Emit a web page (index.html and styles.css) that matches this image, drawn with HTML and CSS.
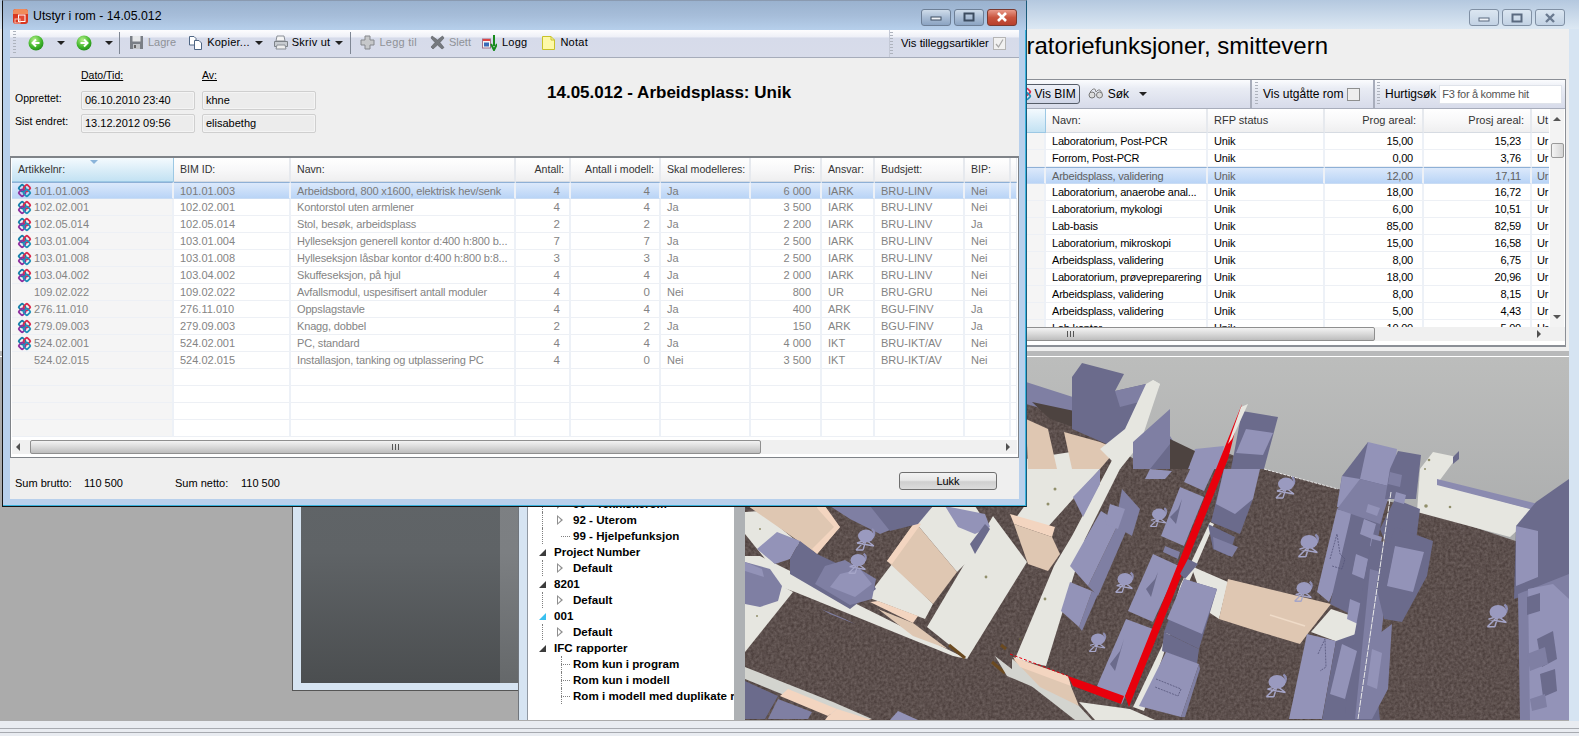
FILE: index.html
```html
<!DOCTYPE html>
<html lang="no">
<head>
<meta charset="utf-8">
<title>Utstyr i rom - 14.05.012</title>
<link rel="stylesheet" href="styles.css">
</head>
<body>
<svg class="defs" width="0" height="0">
  <defs>
    <symbol id="ifc" viewBox="0 0 16 16">
      <g fill="none" stroke-width="1.9">
        <rect x="2.6" y="2.6" width="5.8" height="5.8" rx="1.2" transform="rotate(45 5.5 5.5)" stroke="#157fa8"/>
        <rect x="7.6" y="2.6" width="5.8" height="5.8" rx="1.2" transform="rotate(45 10.5 5.5)" stroke="#d92a4c"/>
        <rect x="2.6" y="7.6" width="5.8" height="5.8" rx="1.2" transform="rotate(45 5.5 10.5)" stroke="#8e2f9e"/>
        <rect x="7.6" y="7.6" width="5.8" height="5.8" rx="1.2" transform="rotate(45 10.5 10.5)" stroke="#1f8fb8"/>
      </g>
    </symbol>
    <symbol id="chair" viewBox="-16 -16 32 32">
      <path class="chl" d="M6-9C9-7 9-3 6 0"/>
      <path class="chs" d="M0 2L-9 5M0 2L-3 12M0 2L8 8M0 2L-10 12M-9 5L8 8M-10 12L-3 12"/>
      <ellipse class="chf" cx="0" cy="-2" rx="8" ry="6.5"/>
    </symbol>
    <radialGradient id="grn" cx=".4" cy=".3" r=".8"><stop offset="0" stop-color="#b6f08a"/><stop offset=".6" stop-color="#3fb52a"/><stop offset="1" stop-color="#1c7f18"/></radialGradient>
    <linearGradient id="skyg" x1="0" y1="0" x2="0" y2="1"><stop offset="0" stop-color="#bcbdbc"/><stop offset="1" stop-color="#9a9c9e"/></linearGradient>
    <filter id="rug" x="0" y="0" width="100%" height="100%" color-interpolation-filters="sRGB">
      <feTurbulence type="fractalNoise" baseFrequency=".35" numOctaves="2" seed="4"/>
      <feColorMatrix values=".2 0 0 0 .26  .2 0 0 0 .21  .2 0 0 0 .2  0 0 0 0 1"/>
      <feComposite in2="SourceGraphic" operator="in"/>
    </filter>
  </defs>
</svg>

<div class="mainwin">
  <div class="mainbar">
    <div class="wbtns wbtns-back">
      <span class="wb"><svg width="12" height="8" viewBox="0 0 12 8"><rect x="1" y="4" width="10" height="3" fill="#eef2f7" stroke="#5a6a80"/></svg></span>
      <span class="wb"><svg width="12" height="10" viewBox="0 0 12 10"><rect x="1.5" y="1.5" width="9" height="7" fill="none" stroke="#5a6a80" stroke-width="2"/></svg></span>
      <span class="wb wb-x"><svg width="14" height="10" viewBox="0 0 14 10"><path d="M3 1L11 9M11 1L3 9" stroke="#6a7a90" stroke-width="2.4"/></svg></span>
    </div>
  </div>
  <div class="mainbody">
    <div class="toppane">
      <h1 class="bighead">Laboratoriefunksjoner, smittevern</h1>
      <div class="panel">
        <div class="ptools">
          <div class="ptsec ptsec-main">
            <span class="visbim"><svg class="ifc"><use href="#ifc"/></svg>Vis BIM</span>
            <svg class="binoc" width="16" height="12" viewBox="0 0 16 12"><circle cx="4" cy="7" r="3" fill="#ddd" stroke="#777"/><circle cx="11.5" cy="7" r="3" fill="#ddd" stroke="#777"/><path d="M2 4L5 1H7L8 4L10 2H12L14 5" fill="none" stroke="#888"/></svg>
            <span class="plab">Søk</span>
            <span class="tri tri-sok"></span>
          </div>
          <div class="ptsec ptsec-vis">
            <span class="grip"></span>
            <span class="plab plab-wide">Vis utgåtte rom</span>
            <span class="check"></span>
          </div>
          <div class="ptsec ptsec-find">
            <span class="grip"></span>
            <span class="plab plab-wide">Hurtigsøk</span>
            <span class="findbox">F3 for å komme hit</span>
          </div>
        </div>
        <div class="pgridrow">
          <div class="pgridclip">
            <table class="rt">
              <colgroup><col class="r0"><col class="r1"><col class="r2"><col class="r3"><col class="r4"><col class="r5"></colgroup>
              <thead><tr><th class="sorted"></th><th>Navn:</th><th>RFP status</th><th class="num">Prog areal:</th><th class="num">Prosj areal:</th><th>Ut</th></tr></thead>
              <tbody>
                <tr><td class="fc"></td><td>Laboratorium, Post-PCR</td><td>Unik</td><td class="num">15,00</td><td class="num">15,23</td><td>Ur</td></tr>
                <tr><td class="fc"></td><td>Forrom, Post-PCR</td><td>Unik</td><td class="num">0,00</td><td class="num">3,76</td><td>Ur</td></tr>
                <tr class="sel"><td class="fc"></td><td>Arbeidsplass, validering</td><td>Unik</td><td class="num">12,00</td><td class="num">17,11</td><td>Ur</td></tr>
                <tr><td class="fc"></td><td>Laboratorium, anaerobe anal...</td><td>Unik</td><td class="num">18,00</td><td class="num">16,72</td><td>Ur</td></tr>
                <tr><td class="fc"></td><td>Laboratorium, mykologi</td><td>Unik</td><td class="num">6,00</td><td class="num">10,51</td><td>Ur</td></tr>
                <tr><td class="fc"></td><td>Lab-basis</td><td>Unik</td><td class="num">85,00</td><td class="num">82,59</td><td>Ur</td></tr>
                <tr><td class="fc"></td><td>Laboratorium, mikroskopi</td><td>Unik</td><td class="num">15,00</td><td class="num">16,58</td><td>Ur</td></tr>
                <tr><td class="fc"></td><td>Arbeidsplass, validering</td><td>Unik</td><td class="num">8,00</td><td class="num">6,75</td><td>Ur</td></tr>
                <tr><td class="fc"></td><td>Laboratorium, prøvepreparering</td><td>Unik</td><td class="num">18,00</td><td class="num">20,96</td><td>Ur</td></tr>
                <tr><td class="fc"></td><td>Arbeidsplass, validering</td><td>Unik</td><td class="num">8,00</td><td class="num">8,15</td><td>Ur</td></tr>
                <tr><td class="fc"></td><td>Arbeidsplass, validering</td><td>Unik</td><td class="num">5,00</td><td class="num">4,43</td><td>Ur</td></tr>
                <tr><td class="fc"></td><td>Lab.kontor</td><td>Unik</td><td class="num">10,00</td><td class="num">5,00</td><td>Ur</td></tr>
              </tbody>
            </table>
          </div>
          <div class="vscroll">
            <span class="arr arr-up"></span>
            <span class="vthumb"></span>
            <span class="arr arr-dn"></span>
          </div>
        </div>
        <div class="hscroll hscroll-back">
          <span class="thumb thumb-back"><i></i></span>
          <span class="arr arr-rt"></span>
        </div>
      </div>
    </div>
    <div class="split"></div>
    <div class="lower">
      <div class="mdi"><div class="mdi-dark"></div><div class="mdi-strip"></div></div>
      <div class="treepane">
        <div class="tree">
          <div class="node leaf2 twisted"><span class="tw closed"></span><span>90 - Tekniskerom</span></div>
          <div class="node leaf2 twisted"><span class="tw closed"></span><span>92 - Uterom</span></div>
          <div class="node leaf2 dotl"><span class="tick"></span><span>99 - Hjelpefunksjon</span></div>
          <div class="node top"><span class="tw open"></span><span>Project Number</span></div>
          <div class="node leaf2 twisted"><span class="tw closed"></span><span>Default</span></div>
          <div class="node top"><span class="tw open"></span><span>8201</span></div>
          <div class="node leaf2 twisted"><span class="tw closed"></span><span>Default</span></div>
          <div class="node top"><span class="tw open hot"></span><span>001</span></div>
          <div class="node leaf2 twisted"><span class="tw closed"></span><span>Default</span></div>
          <div class="node top"><span class="tw open"></span><span>IFC rapporter</span></div>
          <div class="node leaf3"><span class="tick"></span><span>Rom kun i program</span></div>
          <div class="node leaf3"><span class="tick"></span><span>Rom kun i modell</span></div>
          <div class="node leaf3"><span class="tick"></span><span>Rom i modell med duplikate romnr</span></div>
        </div>
      </div>
      <svg class="scene" viewBox="745 358 824 363" width="824" height="363">
        <rect x="745" y="358" width="824" height="363" fill="url(#skyg)"/>
        <polygon filter="url(#rug)" points="745,360 1026,400 1070,420 1150,470 1170,470 1230,455 1264,470 1338,490 1420,510 1569,560 1569,721 745,721"/>
        <polyline class="wedge" points="1264,470 1338,490"/>

        <!-- plaster -->
        <polygon class="w" points="745,513 760,512 800,545 770,566 745,535"/>
        <polygon class="w" points="745,557 760,557 967,660 953,657 795,593 745,575"/>
        <polygon class="w" points="745,600 782,587 793,593 745,653"/>
        <polygon class="w" points="915,523 933,507 975,507 990,530 970,560 957,573"/>
        <polygon class="w" points="892,565 867,598 925,620 933,605"/>
        <polygon class="w" points="993,517 1027,563 967,660 927,628"/>
        <polygon class="w" points="1153,381 1160,385 1125,460 1085,540 1046,667 1015,660 1054,567 1072,537 1110,465"/>
        <polygon class="w" points="1026,460 1026,505 1015,520 1046,530 1100,470 1090,450"/>
        <polygon class="w" points="1133,708 1162,647 1180,587 1210,523 1214,525 1186,590 1144,712"/>
        <polygon class="w" points="1191,567 1228,583 1219,620 1207,612"/>
        <polygon class="w" points="1331,610 1367,622 1369,633 1338,643 1311,633"/>
        <polygon class="w" points="1420,470 1433,453 1457,458 1437,485 1538,512 1510,538 1417,513"/>
        <polygon class="w2" points="745,668 780,682 833,703 872,720 843,720 745,680"/>
        <polygon class="w2" points="1012,660 1079,707 1092,721 1075,721 1012,672"/>
        <polygon class="w" points="1079,703 1130,710 1155,721 1095,721"/>
        <polygon class="d2" points="1437,480 1538,505 1538,512 1437,486"/>
        <polygon class="d" points="1453,458 1459,452 1459,460 1453,465"/>

        <!-- specks -->
        <g class="speck">
          <circle cx="986" cy="578" r="1.4"/><circle cx="1045" cy="600" r="1.4"/><circle cx="1048" cy="505" r="1.5"/>
          <circle cx="760" cy="530" r="1"/><circle cx="757" cy="617" r="1"/><circle cx="1055" cy="490" r="1.5"/>
          <circle cx="1426" cy="507" r="1.8"/><circle cx="1450" cy="508" r="1.3"/><circle cx="1429" cy="461" r="1.3"/>
          <circle cx="1425" cy="470" r="1"/><circle cx="1020" cy="640" r="1"/>
        </g>

        <!-- peach doors -->
        <polygon class="p" points="748,507 815,507 840,528 817,555"/>
        <polygon class="pl" points="815,507 825,507 840,528 817,555 812,550 834,528"/>
        <polygon class="p" points="887,562 915,523 957,573 933,605"/>
        <polygon class="pl" points="887,562 915,523 921,525 892,565"/>
        <polygon class="p" points="878,610 913,624 948,650 913,637"/>
        <polygon class="pl" points="870,603 878,602 918,617 913,624"/>
        <polygon class="pl" points="780,697 788,690 837,710 828,717"/>
        <polygon class="pl" points="828,717 837,710 872,721 825,721"/>
        <polygon class="p" points="1026,420 1048,430 1057,470 1028,470"/>
        <polygon class="p" points="1064,433 1100,443 1117,450 1100,470 1072,470"/>
        <polygon class="pl" points="1010,515 1055,528 1052,538 1014,525"/>
        <polygon class="p" points="1014,525 1052,538 1060,555 1048,572 1028,565"/>
        <polygon class="p" points="1228,580 1331,605 1309,633 1300,645 1260,633 1219,620"/>
        <polyline class="ridge" points="1270,616 1305,627"/>
        <polygon class="p" points="1013,660 1068,680 1079,707 1040,688"/>
        <polygon class="pl" points="1013,658 1068,677 1071,687 1020,668"/>

        <!-- brown sticks -->
        <line class="stick" x1="949" y1="646" x2="965" y2="659"/>
        <line class="stick" x1="992" y1="663" x2="1005" y2="674"/>
        <line class="stick" x1="1001" y1="646" x2="1006" y2="650"/>
        <polygon class="w2" points="995,657 1038,690 1007,677"/>

        <!-- blocks left / bottom -->
        <polygon class="m" points="745,563 770,570 782,587 778,602 760,608 745,605"/>
        <polygon class="l" points="745,563 762,570 764,578 745,572"/>
        <polygon class="l" points="757,550 777,533 800,542 790,560 775,565"/>
        <polygon class="d" points="790,560 800,542 817,555 870,580 876,590 850,610 790,575"/>
        <polygon class="m" points="825,567 845,561 876,580 872,600 850,606 815,585"/>
        <polygon class="l" points="840,575 860,570 872,585 855,598 830,588"/>
        <polygon class="m" points="830,507 925,507 905,525 880,535 850,520"/>
        <polygon class="d" points="870,507 933,507 918,525 890,532"/>
        <polygon class="l" points="945,507 985,515 990,528 975,535 958,528"/>
        <polygon class="d" points="970,545 985,525 990,530 975,555"/>
        <polygon class="d" points="745,682 778,697 765,720 745,720"/>
        <polygon class="m" points="778,700 812,713 808,720 768,720"/>
        <polygon class="l" points="890,721 898,712 918,721"/>
        <polygon class="m" points="821,610 845,620 855,625 830,615"/>
        <use href="#chair" x="850" y="523" width="32" height="32"/>
        <use href="#chair" x="843" y="548" width="30" height="30"/>

        <!-- upper left blocks -->
        <polygon class="m" points="1026,383 1079,400 1079,420 1026,405"/>
        <polygon class="carpet2" points="1032,403 1079,413 1079,430 1050,420"/>
        <polygon class="d" points="1082,364 1124,375 1115,392 1146,385 1151,400 1140,440 1118,450 1072,430 1072,378"/>
        <polygon class="m" points="1115,392 1146,385 1151,400 1120,408"/>
        <polygon class="w" points="1146,385 1153,381 1160,385 1140,445 1120,470 1100,450 1125,430"/>
        <polygon class="m" points="1133,443 1170,410 1170,437 1191,470 1133,470"/>
        <polygon class="d" points="1150,470 1170,445 1191,470"/>
        <polygon class="l" points="1195,450 1224,447 1220,470 1188,470"/>
        <polygon class="carpet2" points="1170,440 1195,452 1188,470 1170,470"/>
        <polygon class="l" points="1150,470 1172,472 1165,480 1145,480"/>

        <!-- left of red -->
        <polygon class="l" points="1195,460 1219,460 1204,492 1184,483"/>
        <polygon class="l" points="1180,488 1204,498 1184,547 1161,537"/>
        <polygon class="l" points="1153,555 1179,567 1153,623 1128,612"/>
        <polygon class="l" points="1126,620 1153,630 1122,705 1097,687"/>
        <polygon class="d" points="1178,510 1182,500 1176,525 1170,518"/>
        <polygon class="d" points="1155,580 1158,573 1151,598 1146,590"/>
        <polygon class="d" points="1120,652 1124,640 1115,672 1110,665"/>
        <polygon class="m" points="1165,547 1180,553 1178,560 1163,553"/>
        <polygon class="m" points="1119,523 1127,530 1098,597 1088,587"/>
        <polygon class="l" points="1101,512 1119,523 1088,587 1070,567"/>
        <polygon class="m" points="1092,592 1098,595 1082,632 1079,628"/>
        <polygon class="l" points="1061,612 1070,583 1092,592 1079,628"/>
        <polygon class="l" points="1073,498 1100,470 1100,485 1083,518"/>
        <polygon class="m" points="1122,490 1140,510 1132,537 1115,527"/>
        <polygon class="l" points="1110,505 1125,510 1118,530 1105,525"/>
        <use href="#chair" x="1084" y="628" width="28" height="28"/>
        <use href="#chair" x="1110" y="567" width="30" height="30"/>
        <use href="#chair" x="1145" y="503" width="28" height="28"/>

        <!-- red wall -->
        <polygon class="red" points="1242,405 1228,460 1132,700 1129,708 1125,697 1220,460"/>
        <polygon class="red" points="1068,677 1124,697 1121,705 1073,687"/>
        <line class="redline" x1="1010" y1="655" x2="1068" y2="677"/>

        <!-- right of red -->
        <polygon class="d" points="1242,412 1278,418 1264,470 1231,470"/>
        <polygon class="l" points="1246,430 1273,434 1263,456 1236,454"/>
        <polygon class="w" points="1241,408 1248,405 1232,440 1228,445"/>
        <polygon class="d" points="1224,470 1253,500 1240,535 1211,523"/>
        <polygon class="l" points="1224,470 1260,470 1253,500 1235,515 1216,505"/>
        <polygon class="d" points="1208,525 1235,538 1229,557 1213,550"/>
        <polygon class="m" points="1213,538 1238,548 1232,558 1214,550"/>
        <polygon class="d" points="1184,580 1217,590 1199,650 1164,633"/>
        <polygon class="l" points="1184,580 1217,590 1202,635 1167,620"/>
        <polygon class="d" points="1164,633 1199,650 1197,665 1162,652"/>
        <polygon class="l" points="1166,653 1199,665 1181,718 1139,707"/>
        <polygon class="m" points="1199,665 1200,670 1185,718 1181,718"/>
        <polyline class="dline" points="1156,680 1181,690 1178,697 1155,688"/>
        <polygon class="d" points="1188,560 1198,565 1185,580 1180,575"/>

        <!-- central right column -->
        <polygon class="l" points="1337,510 1366,517 1329,603 1317,593"/>
        <polygon class="l" points="1307,635 1336,642 1322,720 1289,720"/>
        <polygon class="d" points="1336,642 1370,630 1380,721 1322,721"/>
        <polygon class="d" points="1360,460 1395,460 1380,530 1360,620 1330,605 1350,520"/>
        <polygon class="d" points="1368,443 1342,477 1337,508 1360,512 1372,470"/>
        <polygon class="l" points="1342,477 1360,480 1358,510 1337,508"/>
        <polygon class="l" points="1368,443 1397,450 1392,488 1360,480"/>
        <polygon class="m" points="1360,480 1392,488 1380,525 1337,510"/>
        <polygon class="d" points="1398,452 1421,456 1416,500 1385,500 1390,470"/>
        <polygon class="m" points="1390,473 1402,476 1400,488 1388,485"/>
        <polygon class="d" points="1395,500 1420,510 1415,550 1392,560 1380,530"/>
        <polygon class="l" points="1396,493 1406,496 1404,505 1394,502"/>
        <polygon class="l" points="1368,505 1380,509 1377,517 1366,513"/>
        <polygon class="l" points="1364,520 1376,525 1372,540 1360,535"/>
        <polygon class="l" points="1356,555 1368,560 1364,580 1352,575"/>
        <polygon class="l" points="1350,600 1362,605 1358,625 1347,620"/>
        <polygon class="l" points="1372,535 1382,538 1380,550 1370,547"/>
        <polygon class="d" points="1372,540 1392,545 1370,720 1345,720 1350,660"/>
        <polygon class="l" points="1342,645 1357,652 1345,700 1330,695"/>
        <polygon class="m" points="1370,570 1388,575 1372,720 1355,720"/>
        <polygon class="d" points="1395,528 1433,542 1427,577 1402,623 1384,620 1376,587"/>
        <polygon class="l" points="1395,547 1424,553 1413,593 1387,587"/>
        <polygon class="m" points="1372,640 1392,625 1388,690 1372,720"/>
        <polygon class="l" points="1372,650 1382,654 1377,690 1367,686"/>
        <line class="wline" x1="1391" y1="493" x2="1358" y2="720"/>
        <polyline class="dline" points="1330,560 1337,535 1340,555 1345,560 1342,570 1332,567"/>
        <polyline class="dline" points="1318,655 1325,640 1326,668 1320,672"/>

        <!-- right blocks -->
        <polygon class="d" points="1516,527 1536,503 1569,480 1569,580 1514,600"/>
        <polygon class="l" points="1516,527 1538,532 1538,578 1516,587"/>
        <polygon class="m" points="1518,595 1569,575 1569,721 1520,721"/>
        <polygon class="l" points="1528,590 1553,585 1569,600 1569,721 1530,721"/>
        <polygon class="d" points="1527,598 1540,594 1540,612 1527,616"/>
        <polygon class="d" points="1537,640 1553,632 1557,660 1542,668"/>
        <polygon class="m" points="1527,655 1545,648 1548,665 1530,672"/>
        <polygon class="d" points="1540,675 1555,670 1557,692 1543,698"/>
        <polygon class="m" points="1530,700 1545,695 1547,708 1532,712"/>
        <use href="#chair" x="1481" y="598" width="34" height="34"/>

        <!-- free chairs -->
        <use href="#chair" x="1270" y="471" width="32" height="32"/>
        <use href="#chair" x="1292" y="528" width="34" height="34"/>
        <use href="#chair" x="1289" y="576" width="30" height="30"/>
        <use href="#chair" x="1260" y="668" width="34" height="34"/>
      </svg>
    </div>
    <div class="status"><i></i></div>
  </div>
</div>

<div class="dlg">
  <div class="dlgbar">
    <svg class="appicon" width="17" height="17" viewBox="0 0 17 17">
      <path d="M4 1H13Q16 1 16 4V13Q16 16 13 16H4Q1 16 1 13V4Q1 1 4 1Z" fill="#d9371f"/>
      <path d="M4 1H13Q16 1 16 4V6H1V4Q1 1 4 1Z" fill="#f08a5a"/>
      <rect x="6.5" y="7" width="6.5" height="6.5" fill="#e24a35" stroke="#fff"/>
      <rect x="3" y="11" width="5" height="4" fill="none" stroke="#f6c3b5"/>
    </svg>
    <span class="dlgtitle">Utstyr i rom - 14.05.012</span>
    <div class="wbtns wbtns-dlg">
      <span class="wb"><svg width="12" height="8" viewBox="0 0 12 8"><rect x="1" y="4" width="10" height="3" fill="#eef2f7" stroke="#3c4c60"/></svg></span>
      <span class="wb"><svg width="12" height="10" viewBox="0 0 12 10"><rect x="1.5" y="1.5" width="9" height="7" fill="none" stroke="#3c4c60" stroke-width="2"/></svg></span>
      <span class="wb wb-close"><svg width="14" height="10" viewBox="0 0 14 10"><path d="M3 1L11 9M11 1L3 9" stroke="#fff" stroke-width="2.6"/></svg></span>
    </div>
  </div>
  <div class="client">
    <div class="tools">
      <div class="tsec tsec-main">
        <span class="grip"></span>
        <svg class="ti nav" width="16" height="16" viewBox="0 0 16 16"><circle cx="8" cy="8" r="7.5" fill="url(#grn)"/><path d="M11.5 8H5M8 4.5L4.5 8L8 11.5" fill="none" stroke="#fff" stroke-width="2"/></svg>
        <span class="tri tri-nav"></span>
        <svg class="ti nav nav2" width="16" height="16" viewBox="0 0 16 16"><circle cx="8" cy="8" r="7.5" fill="url(#grn)"/><path d="M4.5 8H11M8 4.5L11.5 8L8 11.5" fill="none" stroke="#fff" stroke-width="2"/></svg>
        <span class="tri tri-nav"></span>
        <span class="tsep"></span>
        <svg class="ti" width="15" height="15" viewBox="0 0 15 15"><path d="M1 1H14V14H1Z" fill="#7a7f86"/><rect x="3.5" y="1" width="8" height="5.5" fill="#e6e8ea"/><rect x="4" y="9" width="7" height="5" fill="#c3c6ca"/><rect x="5" y="10" width="2" height="3" fill="#666"/></svg>
        <span class="tl off tl-lagre">Lagre</span>
        <svg class="ti" width="15" height="16" viewBox="0 0 15 16"><path d="M1.5 1.5H6L8 3.5V10H1.5Z" fill="#fff" stroke="#4f6684"/><path d="M6.5 5.5H11L13.5 8V14.5H6.5Z" fill="#fff" stroke="#4f6684"/></svg>
        <span class="tl tl-sp">Kopier...</span>
        <span class="tri tri-kop"></span>
        <svg class="ti ti-pr" width="16" height="15" viewBox="0 0 16 15"><path d="M4 1H11L12 6H3Z" fill="#f4f4f4" stroke="#8a8f96"/><path d="M1.5 6.5H14.5V11.5H1.5Z" fill="#c7cbd0" stroke="#7d8288"/><path d="M4 10H12L13 14H3Z" fill="#eee" stroke="#8a8f96"/></svg>
        <span class="tl tl-sp">Skriv ut</span>
        <span class="tri tri-skriv"></span>
        <span class="tsep"></span>
        <svg class="ti" width="15" height="15" viewBox="0 0 15 15"><path d="M5 1H10V5H14V10H10V14H5V10H1V5H5Z" fill="#c6c8ca" stroke="#85888c"/></svg>
        <span class="tl tl-sp off tl-legg">Legg til</span>
        <svg class="ti" width="15" height="15" viewBox="0 0 15 15"><path d="M2 1L7.5 5L12.5 1L14 3L10 7.5L14 12.5L12 14L7.5 10L3 14L1 12L5 7.5L1 3Z" fill="#75797e" stroke="#5a5d60" stroke-width=".6"/></svg>
        <span class="tl off tl-slett">Slett</span>
        <svg class="ti ti-log" width="15" height="17" viewBox="0 0 15 17"><rect x="0.5" y="5" width="8" height="9" fill="#f6f6f6" stroke="#a0708a"/><rect x="1" y="5" width="7" height="2" fill="#d44"/><rect x="2" y="8.5" width="5" height="4" fill="#3a6ab8"/><path d="M12 1V12M9 10L12 16L15 10" fill="none" stroke="#178a1c" stroke-width="2"/></svg>
        <span class="tl tl-sp tl-log">Logg</span>
        <svg class="ti ti-log" width="13" height="14" viewBox="0 0 13 14"><path d="M.5.5H9L12.5 4V13.5H.5Z" fill="#fdf9a8" stroke="#c8c22a"/><path d="M9 .5V4H12.5" fill="none" stroke="#c8c22a"/></svg>
        <span class="tl tl-sp">Notat</span>
      </div>
      <div class="tsec tsec-extra">
        <span class="grip"></span>
        <span class="tl tl-vis">Vis tilleggsartikler</span>
        <span class="check check-dis"><svg width="11" height="11" viewBox="0 0 11 11"><path d="M2 6L4.5 9L9 1.5" fill="none" stroke="#a8a8a8" stroke-width="1.2"/></svg></span>
      </div>
    </div>
    <div class="info">
      <div class="meta">
        <span></span><span class="mh">Dato/Tid:</span><span class="mh">Av:</span>
        <span class="ml">Opprettet:</span><span class="mv">06.10.2010 23:40</span><span class="mv">khne</span>
        <span class="ml">Sist endret:</span><span class="mv">13.12.2012 09:56</span><span class="mv">elisabethg</span>
      </div>
      <h2 class="dhead">14.05.012 - Arbeidsplass: Unik</h2>
    </div>
    <div class="dgrid">
      <div class="dclip">
        <table class="dt">
          <colgroup><col class="d0"><col class="d1"><col class="d2"><col class="d3"><col class="d4"><col class="d5"><col class="d6"><col class="d7"><col class="d8"><col class="d9"><col class="d10"></colgroup>
          <thead>
            <tr><th class="sorted"><span class="sortmark"></span>Artikkelnr:</th><th>BIM ID:</th><th>Navn:</th><th class="num">Antall:</th><th class="num">Antall i modell:</th><th>Skal modelleres:</th><th class="num">Pris:</th><th>Ansvar:</th><th>Budsjett:</th><th>BIP:</th><th></th></tr>
          </thead>
          <tbody>
            <tr class="sel"><td class="fc"><span class="art"><svg class="ifc"><use href="#ifc"/></svg>101.01.003</span></td><td>101.01.003</td><td>Arbeidsbord, 800 x1600, elektrisk hev/senk</td><td class="num">4</td><td class="num">4</td><td>Ja</td><td class="num">6 000</td><td>IARK</td><td>BRU-LINV</td><td>Nei</td><td></td></tr>
            <tr><td class="fc"><span class="art"><svg class="ifc"><use href="#ifc"/></svg>102.02.001</span></td><td>102.02.001</td><td>Kontorstol uten armlener</td><td class="num">4</td><td class="num">4</td><td>Ja</td><td class="num">3 500</td><td>IARK</td><td>BRU-LINV</td><td>Nei</td><td></td></tr>
            <tr><td class="fc"><span class="art"><svg class="ifc"><use href="#ifc"/></svg>102.05.014</span></td><td>102.05.014</td><td>Stol, besøk, arbeidsplass</td><td class="num">2</td><td class="num">2</td><td>Ja</td><td class="num">2 200</td><td>IARK</td><td>BRU-LINV</td><td>Ja</td><td></td></tr>
            <tr><td class="fc"><span class="art"><svg class="ifc"><use href="#ifc"/></svg>103.01.004</span></td><td>103.01.004</td><td>Hylleseksjon generell kontor d:400 h:800 b...</td><td class="num">7</td><td class="num">7</td><td>Ja</td><td class="num">2 500</td><td>IARK</td><td>BRU-LINV</td><td>Nei</td><td></td></tr>
            <tr><td class="fc"><span class="art"><svg class="ifc"><use href="#ifc"/></svg>103.01.008</span></td><td>103.01.008</td><td>Hylleseksjon låsbar kontor d:400 h:800 b:8...</td><td class="num">3</td><td class="num">3</td><td>Ja</td><td class="num">2 500</td><td>IARK</td><td>BRU-LINV</td><td>Nei</td><td></td></tr>
            <tr><td class="fc"><span class="art"><svg class="ifc"><use href="#ifc"/></svg>103.04.002</span></td><td>103.04.002</td><td>Skuffeseksjon, på hjul</td><td class="num">4</td><td class="num">4</td><td>Ja</td><td class="num">2 000</td><td>IARK</td><td>BRU-LINV</td><td>Nei</td><td></td></tr>
            <tr><td class="fc"><span class="art art-plain">109.02.022</span></td><td>109.02.022</td><td>Avfallsmodul, uspesifisert antall moduler</td><td class="num">4</td><td class="num">0</td><td>Nei</td><td class="num">800</td><td>UR</td><td>BRU-GRU</td><td>Nei</td><td></td></tr>
            <tr><td class="fc"><span class="art"><svg class="ifc"><use href="#ifc"/></svg>276.11.010</span></td><td>276.11.010</td><td>Oppslagstavle</td><td class="num">4</td><td class="num">4</td><td>Ja</td><td class="num">400</td><td>ARK</td><td>BGU-FINV</td><td>Ja</td><td></td></tr>
            <tr><td class="fc"><span class="art"><svg class="ifc"><use href="#ifc"/></svg>279.09.003</span></td><td>279.09.003</td><td>Knagg, dobbel</td><td class="num">2</td><td class="num">2</td><td>Ja</td><td class="num">150</td><td>ARK</td><td>BGU-FINV</td><td>Ja</td><td></td></tr>
            <tr><td class="fc"><span class="art"><svg class="ifc"><use href="#ifc"/></svg>524.02.001</span></td><td>524.02.001</td><td>PC, standard</td><td class="num">4</td><td class="num">4</td><td>Ja</td><td class="num">4 000</td><td>IKT</td><td>BRU-IKT/AV</td><td>Nei</td><td></td></tr>
            <tr><td class="fc"><span class="art art-plain">524.02.015</span></td><td>524.02.015</td><td>Installasjon, tanking og utplassering PC</td><td class="num">4</td><td class="num">0</td><td>Nei</td><td class="num">3 500</td><td>IKT</td><td>BRU-IKT/AV</td><td>Nei</td><td></td></tr>
            <tr><td class="fc"></td><td></td><td></td><td></td><td></td><td></td><td></td><td></td><td></td><td></td><td></td></tr>
            <tr><td class="fc"></td><td></td><td></td><td></td><td></td><td></td><td></td><td></td><td></td><td></td><td></td></tr>
            <tr><td class="fc"></td><td></td><td></td><td></td><td></td><td></td><td></td><td></td><td></td><td></td><td></td></tr>
            <tr><td class="fc"></td><td></td><td></td><td></td><td></td><td></td><td></td><td></td><td></td><td></td><td></td></tr>
          </tbody>
        </table>
      </div>
      <div class="hscroll hscroll-dlg">
        <span class="arr arr-lf"></span>
        <span class="thumb thumb-dlg"><i></i></span>
        <span class="arr arr-rt"></span>
      </div>
    </div>
    <div class="foot">
      <span class="fl">Sum brutto:</span><span class="fv">110 500</span>
      <span class="fl fl2">Sum netto:</span><span class="fv">110 500</span>
      <span class="lukk">Lukk</span>
    </div>
  </div>
</div>
</body>
</html>
```
FILE: styles.css
```css
* { box-sizing: border-box; }
html, body { margin: 0; width: 1579px; height: 736px; overflow: hidden; }
body { position: relative; background: #ababab; font: 11px/1.2 "Liberation Sans", Arial, sans-serif; color: #000; }
.defs { position: absolute; }

/* main window */
.mainwin { position: absolute; left: 0; top: 0; width: 1579px; height: 736px; display: flex; flex-direction: column; background: #d6e4f2; }
.mainbar { height: 29px; flex: none; display: flex; justify-content: flex-end; background: linear-gradient(#b4c8df, #dce8f3); }
.mainbody { flex: 1; display: flex; flex-direction: column; }
.toppane { height: 318px; margin-right: 10px; background: #efefef; display: flex; flex-direction: column; }
.bighead { margin: 0; height: 50px; padding: 3px 241px 0 0; text-align: right; font: 400 24px/28px "Liberation Sans", Arial, sans-serif; color: #000; white-space: nowrap; }
.panel { margin-left: 620px; width: 946px; height: 268px; border: 1px solid #8b8f96; border-bottom-width: 2px; background: #fff; display: flex; flex-direction: column; }
.ptools { height: 29px; flex: none; display: flex; background: linear-gradient(#fbfcfe 0, #e9ecf4 30%, #d7dbea 100%); border-bottom: 1px solid #a8adbb; font-size: 12px; }
.ptsec { display: flex; align-items: center; height: 100%; }
.ptsec-main { flex: 1; justify-content: flex-end; padding-right: 103px; }
.ptsec-vis { width: 123px; border-left: 2px solid #a8adbb; padding-left: 3px; }
.ptsec-find { width: 192px; border-left: 2px solid #a8adbb; padding-left: 2px; }
.visbim { height: 20px; width: 70px; display: flex; align-items: center; justify-content: flex-end; padding-right: 3px; gap: 3px; border: 1px solid #555c68; border-radius: 3px; background: linear-gradient(#eef1f8, #cfd5e6); }
.visbim .ifc { width: 14px; height: 14px; }
.binoc { margin-left: 8px; }
.plab { margin-left: 4px; white-space: nowrap; }
.plab-wide { margin-left: 5px; }
.findbox { margin-left: 3px; width: 123px; height: 19px; background: #fff; border: 1px solid #dfe3ea; padding-left: 2px; font-size: 11px; letter-spacing: -.3px; line-height: 17px; color: #555; white-space: nowrap; }
.tri { display: inline-block; width: 0; height: 0; border: 4px solid transparent; border-top: 4px solid #222; border-bottom: 0; }
.tri-sok { margin-left: 10px; }
.grip { width: 3px; height: 24px; flex: none; background: repeating-linear-gradient(#aeb3bd 0 1px, transparent 1px 3px); }
.check { display: flex; align-items: center; justify-content: center; width: 13px; height: 13px; margin-left: 4px; border: 1px solid #8e8f8f; background: #eee; }
.check-dis { border-color: #b5b5b5; background: #f1f1f1; }

.pgridrow { height: 218px; flex: none; display: flex; }
.pgridclip { width: 928px; height: 218px; overflow: hidden; }
table { border-collapse: separate; border-spacing: 0; table-layout: fixed; }
th { font-weight: 400; text-align: left; white-space: nowrap; overflow: hidden; background: linear-gradient(#fff 0, #f8f8f9 50%, #efeff0 100%); border-right: 2px solid #e6e9ee; border-bottom: 1px solid #d6dbe2; padding: 0 6px; color: #333; }
td { height: 17px; padding: 0 6px; white-space: nowrap; overflow: hidden; border-right: 2px solid #edf1f7; border-bottom: 1px solid #edf0f5; line-height: 15px; }
.num { text-align: right; }
td.num { padding-right: 9px; }
.fc { background: #f5f5f5; }
.sorted { background: linear-gradient(#f4fafe, #d6ebf7 60%, #c3e2f3); border-bottom: 1px solid #9cc8e4; border-right: 1px solid #9cc8e4; position: relative; }
.sel td { background: linear-gradient(#dce9fb, #b9d4f6); border-bottom-color: #c9dcf4; border-top: 1px solid #8eb0d6; color: #707070; line-height: 14px; }

.rt { width: 928px; }
.r0 { width: 425px; } .r1 { width: 162px; } .r2 { width: 117px; } .r3 { width: 99px; } .r4 { width: 108px; } .r5 { width: 17px; }
.rt th { height: 24px; font-size: 11px; }
.rt td { font-size: 11px; color: #000; letter-spacing: -.2px; }
.rt .sel td { color: #606060; }
.rt td:last-child, .rt th:last-child { padding-right: 0; padding-left: 5px; border-right: 0; }

.vscroll { width: 14px; margin-left: 1px; height: 218px; background: #f3f3f3; display: flex; flex-direction: column; align-items: center; padding-top: 8px; }
.vthumb { display: block; width: 13px; height: 15px; margin-top: 22px; background: linear-gradient(90deg, #f4f4f4, #d4d4d4); border: 1px solid #9a9a9a; border-radius: 2px; }
.arr { display: block; width: 0; height: 0; border: 4px solid transparent; flex: none; }
.arr-up { border-top: 0; border-bottom: 4px solid #555; }
.arr-dn { border-bottom: 0; border-top: 4px solid #555; margin-top: auto; margin-bottom: 8px; }
.arr-rt { border-right: 0; border-left: 4px solid #505050; }
.arr-lf { border-left: 0; border-right: 4px solid #505050; }

.hscroll { height: 14px; flex: none; display: flex; align-items: center; background: #f0f0f0; }
.thumb { display: flex; align-items: center; justify-content: center; height: 14px; background: linear-gradient(#f3f3f3, #dcdcdc 45%, #bdbdbd); border: 1px solid #8f8f8f; border-radius: 2px; }
.thumb i { display: block; width: 7px; height: 6px; background: repeating-linear-gradient(90deg, #555 0 1px, transparent 1px 3px); }
.thumb-back { margin-left: 144px; width: 610px; }
.hscroll-back .arr-rt { margin-left: 162px; }
.hscroll-back { width: 944px; }

.split { height: 10px; flex: none; margin-right: 10px; background: linear-gradient(#efefef 0 4px, #b8b9ba 4px 9px, #fff 9px); }
.lower { height: 364px; flex: none; display: flex; margin-right: 10px; background: #ababab; align-items: flex-start; padding-left: 292px; }
.mdi { width: 226px; height: 334px; flex: none; display: flex; padding: 0 0 7px 8px; background: #d6e4f2; border-left: 1px solid #555; border-bottom: 1px solid #555; }
.mdi-dark { width: 199px; background: linear-gradient(#62676a 0, #5f6366 60%, #4b4e50 100%); }
.mdi-strip { flex: 1; background: linear-gradient(#7f8285 0, #7c7f82 60%, #65686a 100%); }
.treepane { width: 227px; height: 363px; flex: none; border-left: 1px solid #70757c; padding-left: 8px; background: #d6e4f2; border-right: 11px solid #aeb1b4; }
.tree { background: #fff; height: 363px; border-left: 1px solid #9098a2; padding-top: 139px; overflow: hidden; font: 700 11.6px/16px "Liberation Sans", Arial, sans-serif; }
.node { position: relative; height: 16px; display: flex; align-items: center; white-space: nowrap; }
.node.top { padding-left: 26px; }
.node.twisted, .node.dotl, .node.leaf3 { padding-left: 45px; }
.tw, .tick { position: absolute; }
.tw.open { left: 11px; top: 5px; width: 0; height: 0; border-style: solid; border-width: 0 0 7px 7px; border-color: transparent transparent #3c3c3c transparent; }
.tw.open.hot { border-bottom-color: #39c0f0; }
.tw.closed { left: 29px; top: 3px; width: 0; height: 0; border-style: solid; border-width: 5px 0 5px 6px; border-color: transparent transparent transparent #8f8f8f; }
.tw.closed::after { content: ""; position: absolute; left: -5px; top: -3px; border-style: solid; border-width: 3px 0 3px 3.5px; border-color: transparent transparent transparent #fff; }
.node.twisted::before, .node.dotl::before { content: ""; position: absolute; left: 14px; top: 0; bottom: 0; border-left: 1px dotted #808080; }
.node.leaf3::before { content: ""; position: absolute; left: 33px; top: 0; bottom: 0; border-left: 1px dotted #808080; }
.tick { left: 33px; top: 8px; width: 9px; border-top: 1px dotted #808080; }
.scene { display: block; flex: none; }
.status { height: 15px; flex: none; background: #e9ecf1; padding-top: 7px; }
.status i { display: block; height: 5px; border: solid #a7aab0; border-width: 1px 0; }

/* scene fills */
.carpet2 { fill: #4d4340; }
.w { fill: #e6e6e0; }
.w2 { fill: #d3d4cf; }
.p { fill: #dfc7b2; }
.pl { fill: #f3d5c0; }
.l { fill: #9393b8; }
.m { fill: #7f7fa3; }
.d { fill: #6b6b8c; }
.d2 { fill: #8b8bb0; }
.red { fill: #e8000c; }
.redline { stroke: #e8000c; stroke-width: 1; stroke-dasharray: 3 2; }
.ridge { fill: none; stroke: #efdbc8; stroke-width: 1.5; }
.wedge { fill: none; stroke: #e8e8e8; stroke-width: 1; stroke-dasharray: 3 1; }
.stick { stroke: #6b4a20; stroke-width: 3; }
.speck { fill: #6e6b3a; opacity: .7; }
.dline { fill: none; stroke: #55557a; stroke-width: .8; stroke-dasharray: 2 1; }
.wline { stroke: #e8e8e8; stroke-width: 1; stroke-dasharray: 6 1; }
.chf { fill: #9a9abf; }
.chs { fill: none; stroke: #a5a5c8; stroke-width: 1.4; }
.chl { fill: none; stroke: #8d8db3; stroke-width: 2.4; }

/* window buttons */
.wbtns { display: flex; padding-top: 9px; }
.wbtns-back { gap: 3px; padding-right: 14px; }
.wbtns-dlg { gap: 3px; margin-left: auto; padding: 0 9px 0 0; margin-top: 2px; }
.wb { display: flex; align-items: center; justify-content: center; width: 30px; height: 17px; border: 1px solid #6d7f96; border-radius: 3px; background: linear-gradient(#cfdcea, #a9bdd5 50%, #8ca4c2); }
.wbtns-back .wb { background: linear-gradient(#dbe6f1, #c2d2e4); border-color: #8090a4; }
.wb-close { background: linear-gradient(#e89a8a, #c9553f 50%, #b8402d); border-color: #7a3a30; }

/* dialog */
.dlg { position: absolute; left: 2px; top: 0; width: 1025px; height: 507px; display: flex; flex-direction: column; padding: 0 7px 7px; background: #b8d0ec; border: 1px solid #151515; border-top-color: #8a9ab0; border-right-color: #1a5a7a; box-shadow: inset -1px -1px 0 #39b2dc; }
.dlgbar { height: 29px; flex: none; display: flex; align-items: center; margin: 0 -7px; padding: 1px 0 0 9px; background: linear-gradient(#9ab2cf 0, #a6bdd9 50%, #b6cfeb 100%); }
.appicon { flex: none; }
.dlgtitle { margin-left: 4px; font-size: 12.3px; color: #000; white-space: nowrap; }
.client { width: 1009px; flex: 1; display: flex; flex-direction: column; background: #efefef; }
.tools { height: 28px; flex: none; display: flex; background: linear-gradient(#fdfdfe 0, #eef0f7 25%, #d6dbea 30%, #d8dcea 100%); border-bottom: 1px solid #a6acba; }
.tsec { display: flex; align-items: center; height: 100%; white-space: nowrap; }
.tsec-main { flex: 1; padding-left: 3px; padding-bottom: 2px; }
.tsec-extra { width: 130px; border-left: 1px solid #c4c9d6; }
.tsec-extra .grip { margin-right: 8px; }
.ti { flex: none; margin-right: 4px; }
.ti-pr { margin-right: 3px; }
.ti-log { margin-right: 5px; }
.nav { margin-left: 12px; margin-right: 0; }
.nav2 { margin-left: 11px; }
.tri-nav { margin-left: 13px; }
.tl { font-size: 11px; }
.tl-sp { letter-spacing: .25px; }
.tl-vis { font-size: 11.3px; }
.off { color: #8f9297; }
.tsep { width: 1px; height: 22px; margin: 0 9px 0 6px; background: #7f8794; }
.tl-lagre { margin-right: 12px; }
.tri-kop { margin-left: 5px; margin-right: 10px; }
.tri-skriv { margin-left: 5px; margin-right: 1px; }
.tl-legg { margin-right: 13px; }
.tl-slett { margin-right: 11px; }
.tl-log { margin-right: 15px; }

.info { height: 98px; flex: none; display: flex; }
.meta { display: grid; grid-template-columns: 66px 121px 114px; grid-template-rows: 29px 19px 19px; row-gap: 4px; padding-left: 5px; align-content: start; width: 322px; }
.mh { text-decoration: underline; font-size: 10.5px; padding-top: 11px; }
.ml { font-size: 10.5px; padding-top: 1px; }
.mv { width: 114px; height: 19px; border: 1px solid #cfcfcf; border-radius: 2px; padding-left: 3px; line-height: 17px; font-size: 11px; background: #ececec; box-shadow: inset 0 0 0 1px #f4f4f4; }
.dhead { margin: 25px 0 0 215px; font: 700 17px/20px "Liberation Sans", Arial, sans-serif; white-space: nowrap; height: 20px; }

.dgrid { height: 302px; flex: none; border: 1px solid #7f8388; border-top-width: 2px; padding: 0 1px; display: flex; flex-direction: column; background: #fff; }
.dclip { height: 281px; flex: none; overflow: hidden; }
.dt { width: 1006px; }
.d0 { width: 162px; } .d1 { width: 117px; } .d2 { width: 225px; } .d3 { width: 55px; } .d4 { width: 90px; } .d5 { width: 90px; } .d6 { width: 71px; } .d7 { width: 53px; } .d8 { width: 90px; } .d9 { width: 46px; } .d10 { width: 7px; }
.dt th { height: 24px; font-size: 10.6px; }
.dt th.num { padding-right: 5px; }
.dt td { font-size: 11px; color: #848484; }
.dt .sel td { color: #7a7a7a; }
.dt td.fc { padding: 0; }
.dt td:nth-child(3) { letter-spacing: -.15px; }
.dt td:nth-child(4), .dt td:nth-child(5) { font-size: 11.5px; }
.art { display: flex; align-items: center; gap: 2px; padding-left: 5px; }
.art .ifc { width: 15px; height: 15px; flex: none; }
.art-plain { padding-left: 22px; }
.sortmark { position: absolute; left: 78px; top: 2px; width: 0; height: 0; border: 4px solid transparent; border-top: 4px solid #8ab4da; border-bottom: 0; }
.hscroll-dlg { margin-top: 1px; padding-left: 4px; }
.thumb-dlg { width: 731px; margin-left: 10px; }
.hscroll-dlg .arr-rt { margin-left: 245px; }

.foot { flex: 1; display: flex; align-items: center; padding: 10px 22px 0 5px; font-size: 11px; }
.fl { width: 69px; }
.fv { width: 91px; }
.fl2 { width: 66px; }
.lukk { margin-left: auto; width: 98px; height: 18px; margin-top: -6px; text-align: center; line-height: 16px; border: 1px solid #6f6f6f; border-radius: 3px; background: linear-gradient(#f3f3f3 0, #e8e8e8 45%, #cfcfcf 55%, #dcdcdc 100%); }
```
